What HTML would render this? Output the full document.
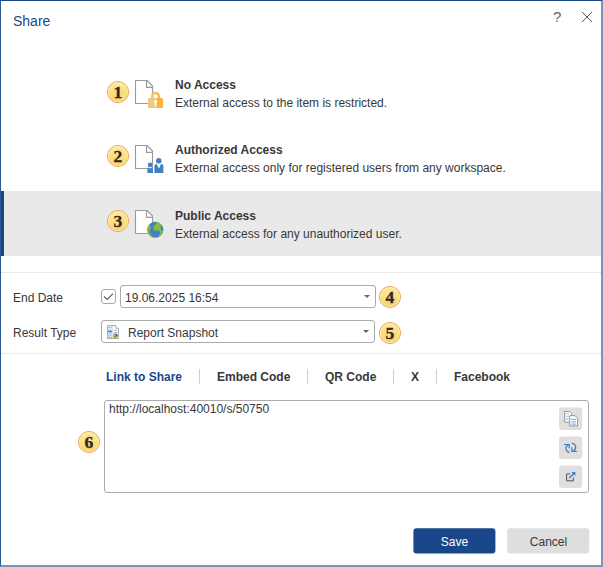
<!DOCTYPE html>
<html><head><meta charset="utf-8"><title>Share</title>
<style>
*{box-sizing:border-box;margin:0;padding:0}
html,body{width:603px;height:567px;overflow:hidden;background:#fff}
body{font-family:"Liberation Sans",Arial,sans-serif;font-size:12px;color:#383838;position:relative}
.abs{position:absolute}
svg{position:absolute;overflow:visible}
#frame{position:absolute;left:0;top:0;width:603px;height:567px;border-top:1px solid #19478a;border-left:1px solid #2c5896;border-right:2px solid #7b95b9;border-bottom:2px solid #7b95b9;pointer-events:none}
#title{left:13px;top:12px;font-size:14px;color:#19478a;line-height:18px}
.row{left:1px;width:600px;height:65px}
.row.sel{background:#e9e9e9}
.bar{left:0;top:191px;width:4px;height:65px;background:#19478a}
.rt{left:175px;font-weight:bold;font-size:12px;line-height:15px;color:#383838;white-space:nowrap}
.rd{left:175px;font-size:12px;line-height:15px;color:#383838;white-space:nowrap}
.dot{left:1px;width:600px;height:0;border-top:1px dotted #d8d8d8}
.lbl{left:13px;font-size:12px;line-height:15px;color:#383838}
.inp{height:23px;border:1px solid #ababab;border-radius:3px;background:#fff;font-size:12px;line-height:21px;color:#383838;white-space:nowrap}
.arrow{width:0;height:0;border-left:3px solid transparent;border-right:3px solid transparent;border-top:3px solid #666}
.tab{top:370px;font-weight:bold;font-size:12px;line-height:15px;color:#383838;white-space:nowrap}
.sep{top:369px;width:1px;height:15px;background:#d0d0d0}
.ib{left:558px;width:24px;height:24px;border-radius:3px;background:#e4e4e4}
.btn{top:529px;width:83px;height:26px;font-size:12px;line-height:26px;text-align:center}
.bn{font-family:"Liberation Serif","Times New Roman",serif;font-weight:bold;font-size:17.600px;fill:#3a2226;stroke:#3a2226;stroke-width:0.300px;text-anchor:middle}
</style></head><body>
<svg width="0" height="0"><defs>
<linearGradient id="bg" x1="0" y1="0" x2="0" y2="1"><stop offset="0" stop-color="#fcedA0"/><stop offset="0.5" stop-color="#f9e080"/><stop offset="1" stop-color="#f6d465"/></linearGradient>
<g id="badge"><circle cx="11" cy="11" r="10.550" fill="url(#bg)" stroke="#efa45e" stroke-width="1"/><circle cx="11" cy="11" r="9.600" fill="none" stroke="#fce9bd" stroke-width="0.900" opacity="0.9"/></g>
<g id="doc"><path d="M0.5 0.5H12L17.5 6V23.5H0.5Z" fill="#fff" stroke="#999999" stroke-width="1.100" stroke-linejoin="round"/><path d="M11.500 0.500V7.400H17.500" fill="none" stroke="#999999" stroke-width="1.100" stroke-linejoin="round"/></g>
<clipPath id="gc"><circle cx="20.250" cy="19.800" r="8"/></clipPath>
<clipPath id="lh"><rect x="-2" y="-2" width="10.300" height="20"/></clipPath>
</defs></svg>

<div id="title" class="abs">Share</div>
<div class="abs" style="left:553px;top:8px;font-size:15px;line-height:17px;color:#666">?</div>
<svg style="left:580.600px;top:10.500px" width="12" height="12" viewBox="0 0 12 12"><path d="M1 1L11 11M11 1L1 11" stroke="#555" stroke-width="1" fill="none"/></svg>

<!-- row 1 -->
<svg style="left:107px;top:81px" width="22" height="22"><use href="#badge"/><text class="bn" x="11" y="17">1</text></svg>
<svg style="left:135px;top:79.5px" width="30" height="30"><use href="#doc"/>
 <g transform="translate(13.100,12)" color="#f9b639"><g id="lk"><path d="M4.200 7V4.300a3.300 3.300 0 0 1 6.600 0V7" fill="none" stroke="currentColor" stroke-width="2.300"/><rect x="0" y="6.100" width="15" height="10" rx="1.500" fill="currentColor"/></g></g>
 <g transform="translate(13.100,12)" clip-path="url(#lh)" color="#edc97f"><use href="#lk"/></g>
 <g transform="translate(13.100,12)" fill="#fff"><circle cx="7.500" cy="9.700" r="1.600"/><path d="M6.900 10.500h1.200l0.500 3.700h-2.200z"/></g></svg>
<div class="abs rt" style="top:78px">No Access</div>
<div class="abs rd" style="top:96px">External access to the item is restricted.</div>
<!-- row 2 -->
<svg style="left:107px;top:144.500px" width="22" height="22"><use href="#badge"/><text class="bn" x="11" y="17">2</text></svg>
<svg style="left:135px;top:144.500px" width="30" height="30"><use href="#doc"/>
 <g fill="#4180c2"><circle cx="15.100" cy="19.900" r="2.300"/><path d="M12.300 28v-3.600q0-1.800 1.500-1.800l1.300 2 1.300-2q1.600 0 1.600 1.800v3.600z"/><circle cx="23.800" cy="15.700" r="2.800"/><path d="M19.400 28v-6.600q0-2.600 2.200-2.600l2.300 4.800 2.300-4.800q2.200 0 2.200 2.600v6.600z"/></g></svg>
<div class="abs rt" style="top:143px">Authorized Access</div>
<div class="abs rd" style="top:161px">External access only for registered users from any workspace.</div>
<!-- row 3 -->
<div class="abs row sel" style="top:191px"></div>
<div class="abs bar"></div>
<svg style="left:107px;top:210px" width="22" height="22"><use href="#badge"/><text class="bn" x="11" y="17">3</text></svg>
<svg style="left:135px;top:210px" width="30" height="30"><use href="#doc"/>
 <circle cx="20.250" cy="19.800" r="8" fill="#4381c3"/>
 <g clip-path="url(#gc)"><path d="M11.54 13.93 L14.08 14.98 L15.35 16.04 L16.11 17.52 L15.35 19.22 L14.42 20.28 L14.42 22.39 L15.98 24.93 L17.97 26.41 L17.68 28.32 L11.54 28.32Z" fill="#8aba3a"/><path d="M21.49 11.39 L21.06 14.35 L18.52 16.04 L18.10 17.31 L18.95 19.43 L20.22 20.91 L22.54 20.28 L24.24 20.70 L25.30 22.39 L24.87 24.08 L24.03 24.93 L23.81 26.84 L29.32 26.84 L29.32 11.39Z" fill="#8aba3a"/><path d="M26.99 15.53 L25.72 16.25 L25.30 17.95 L25.93 19.43 L27.62 21.12 L29.32 21.12 L29.32 15.53Z" fill="#4381c3"/></g></svg>
<div class="abs rt" style="top:209px">Public Access</div>
<div class="abs rd" style="top:227px">External access for any unauthorized user.</div>

<div class="abs dot" style="top:272px"></div>
<div class="abs lbl" style="top:291px">End Date</div>
<div class="abs" style="left:101px;top:289px;width:15px;height:15px;border:1px solid #ababab;border-radius:3px;background:#fff"></div>
<svg style="left:101px;top:289px" width="15" height="15"><path d="M3 7.500L6.300 10.500L12 4.600" fill="none" stroke="#666" stroke-width="1.200"/></svg>
<div class="abs inp" style="left:120px;top:285px;width:256px;padding-left:4px;padding-top:2px">19.06.2025 16:54</div>
<div class="abs arrow" style="left:364px;top:295px"></div>
<svg style="left:379px;top:286px" width="22" height="22"><use href="#badge"/><text class="bn" x="11" y="17">4</text></svg>

<div class="abs lbl" style="top:326px">Result Type</div>
<div class="abs inp" style="left:101px;top:320px;width:274px;padding-left:26px;padding-top:2px">Report Snapshot</div>
<svg style="left:107px;top:324.500px" width="13" height="15"><path d="M0.500 0.500H8.500L11.500 3.500V13.500H0.500Z" fill="#fff" stroke="#a6a6a6" stroke-width="0.900"/><path d="M8.500 0.500V3.500H11.500" fill="#f2f2f2" stroke="#a6a6a6" stroke-width="0.700"/><rect x="1" y="1" width="4.200" height="12" fill="#dfeaf8"/><path d="M5.400 1V13" stroke="#c9c9c9" stroke-width="0.600"/><g stroke="#a3c4ec" stroke-width="1"><path d="M1.300 2.500H4.900M1.300 8.700H4.900M1.300 10.700H4.900M1.300 12.500H4.900M6.300 5.500H10.700M6.300 7.500H10.700"/></g><path d="M1.200 7.300V5.200H2.200V6H3V5H4V6H4.900V7.300Z" fill="#3c7cc0"/><circle cx="8.300" cy="10.800" r="2.400" fill="#7db232"/><path d="M8.300 10.800V8.400A2.400 2.400 0 0 1 10.600 11.600z" fill="#2f6fbd"/><path d="M8.300 10.800L6 11.400A2.400 2.400 0 0 1 8.300 8.400z" fill="#f2a93b"/></svg>
<div class="abs arrow" style="left:363px;top:330px"></div>
<svg style="left:379px;top:322px" width="22" height="22"><use href="#badge"/><text class="bn" x="11" y="17">5</text></svg>
<div class="abs dot" style="top:353px"></div>

<div class="abs tab" style="left:106px;color:#19478a">Link to Share</div>
<div class="abs sep" style="left:199px"></div>
<div class="abs tab" style="left:217px">Embed Code</div>
<div class="abs sep" style="left:307px"></div>
<div class="abs tab" style="left:325px">QR Code</div>
<div class="abs sep" style="left:393px"></div>
<div class="abs tab" style="left:411px">X</div>
<div class="abs sep" style="left:436px"></div>
<div class="abs tab" style="left:454px">Facebook</div>

<div class="abs" style="left:104px;top:400px;width:485px;height:93px;border:1px solid #ababab;border-radius:3px;background:#fff"></div>
<div class="abs" style="left:109px;top:402px;font-size:12px;line-height:14px;color:#383838">http://localhost:40010/s/50750</div>
<svg style="left:78px;top:431px" width="22" height="22"><use href="#badge"/><text class="bn" x="11" y="17">6</text></svg>
<svg style="left:552px;top:402px" width="42" height="98">
<g fill="#dfdfdf"><rect x="7" y="5.400" width="23.200" height="22.600" rx="3"/><rect x="7" y="34.500" width="23.200" height="22.600" rx="3"/><rect x="7" y="63.500" width="23.200" height="22.600" rx="3"/></g>
<g stroke="#8c8c8c" stroke-width="0.900" fill="#fff"><path d="M12.700 9.500H17.500L19.700 11.700V20.100H12.700Z"/><path d="M17.700 13.700H23L25.500 16.200V23.900H17.700Z"/></g>
<g stroke="#9dc0ea" stroke-width="1.100" fill="none"><path d="M13.800 11.700H16.800M13.800 14.300H16.800M13.800 16.900H16.800"/></g>
<g stroke="#8db4e6" stroke-width="1.300" fill="none"><path d="M19.200 17.400H24.100M19.200 19.800H24.100M19.200 22.100H24.100"/></g>
<g stroke="#3c7cc0" stroke-width="1.200" fill="none" transform="translate(0,28)"><path d="M12.200 14.500H17.200V18.300"/><path d="M16.800 14.700Q13.600 16 14 19Q14.500 22 17.400 22.600"/><path d="M19.900 17.300V21.500H24.900"/><path d="M19.800 13.400Q23.200 13.600 23.700 17Q23.800 20 21 21.300"/></g>
<g transform="translate(0,56)"><path d="M18 15.900H14.600V22.800H21.400V19.600" fill="none" stroke="#555" stroke-width="1"/><path d="M17.300 19.900L22 15.300" stroke="#3c7cc0" stroke-width="1.400" fill="none"/><path d="M19.500 14.100H23.300V17.900Z" fill="#3c7cc0"/></g>
</svg>

<svg style="left:0;top:0" width="603" height="567"><rect x="413.400" y="528.200" width="82" height="25.200" rx="3" fill="#19478a"/><rect x="507.300" y="528.200" width="82" height="25.200" rx="3" fill="#dedede"/></svg>
<div class="abs btn" style="left:413px;color:#fff">Save</div>
<div class="abs btn" style="left:507px;color:#383838">Cancel</div>
<div id="frame"></div>
</body></html>
